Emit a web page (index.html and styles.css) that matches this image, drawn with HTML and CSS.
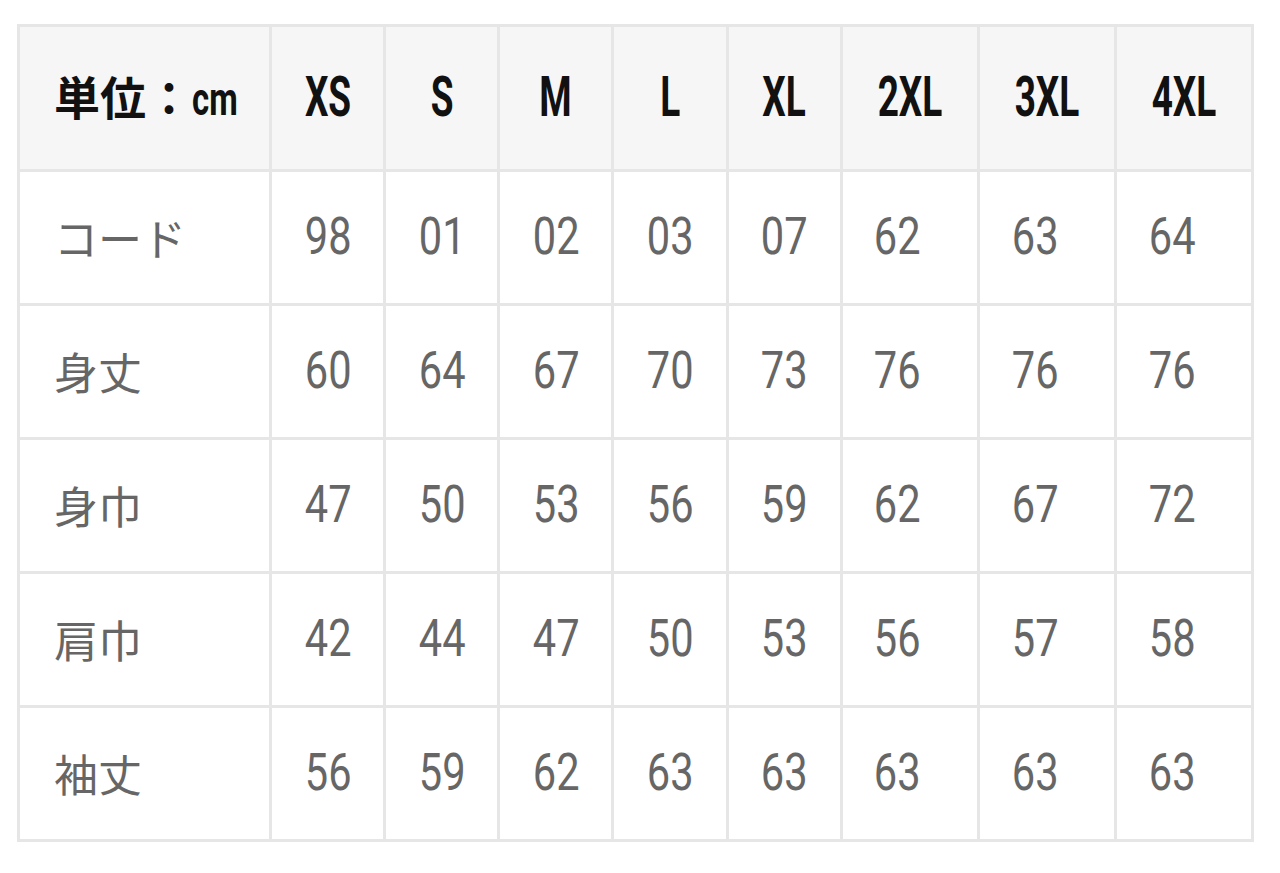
FILE: index.html
```html
<!DOCTYPE html>
<html lang="ja">
<head>
<meta charset="utf-8">
<title>サイズ表</title>
<link rel="stylesheet" href="styles.css">
</head>
<body>
<table class="size-table">
  <colgroup>
    <col class="c-label">
    <col class="c-s"><col class="c-s"><col class="c-s"><col class="c-s"><col class="c-s">
    <col class="c-w"><col class="c-w"><col class="c-w">
  </colgroup>
  <thead>
    <tr>
      <th class="label"><span class="jp">単位：</span><span class="unit">cm</span></th>
      <th><span class="h">XS</span></th>
      <th><span class="h">S</span></th>
      <th><span class="h">M</span></th>
      <th><span class="h">L</span></th>
      <th><span class="h">XL</span></th>
      <th><span class="h">2XL</span></th>
      <th><span class="h">3XL</span></th>
      <th><span class="h">4XL</span></th>
    </tr>
  </thead>
  <tbody>
    <tr><td class="label">コード</td><td><span class="n">98</span></td><td><span class="n">01</span></td><td><span class="n">02</span></td><td><span class="n">03</span></td><td><span class="n">07</span></td><td class="wide"><span class="n">62</span></td><td class="wide"><span class="n">63</span></td><td class="wide"><span class="n">64</span></td></tr>
    <tr><td class="label">身丈</td><td><span class="n">60</span></td><td><span class="n">64</span></td><td><span class="n">67</span></td><td><span class="n">70</span></td><td><span class="n">73</span></td><td class="wide"><span class="n">76</span></td><td class="wide"><span class="n">76</span></td><td class="wide"><span class="n">76</span></td></tr>
    <tr><td class="label">身巾</td><td><span class="n">47</span></td><td><span class="n">50</span></td><td><span class="n">53</span></td><td><span class="n">56</span></td><td><span class="n">59</span></td><td class="wide"><span class="n">62</span></td><td class="wide"><span class="n">67</span></td><td class="wide"><span class="n">72</span></td></tr>
    <tr><td class="label">肩巾</td><td><span class="n">42</span></td><td><span class="n">44</span></td><td><span class="n">47</span></td><td><span class="n">50</span></td><td><span class="n">53</span></td><td class="wide"><span class="n">56</span></td><td class="wide"><span class="n">57</span></td><td class="wide"><span class="n">58</span></td></tr>
    <tr><td class="label">袖丈</td><td><span class="n">56</span></td><td><span class="n">59</span></td><td><span class="n">62</span></td><td><span class="n">63</span></td><td><span class="n">63</span></td><td class="wide"><span class="n">63</span></td><td class="wide"><span class="n">63</span></td><td class="wide"><span class="n">63</span></td></tr>
  </tbody>
</table>
</body>
</html>
```
FILE: styles.css
```css
html, body {
  background: #ffffff;
}
body {
  margin: 0;
  padding: 24px 0 0 17px;
}
.size-table {
  border-collapse: collapse;
  table-layout: fixed;
  width: 1237px;
  font-family: Roboto, "Liberation Sans", "Noto Sans CJK JP", sans-serif;
}
.c-label { width: 252px; }
.c-s { width: 114px; }
.c-w { width: 137px; }
.size-table th,
.size-table td {
  border: 3px solid #e6e6e6;
  text-align: center;
  vertical-align: middle;
  padding: 0;
  line-height: 1.2;
}
.size-table th {
  height: 142px;
  background: #f6f6f6;
  color: #111111;
  font-weight: 700;
  font-size: 56px;
}
.size-table td {
  height: 131px;
  color: #666666;
  font-size: 52px;
  font-weight: 400;
}
.size-table td.wide {
  padding-right: 24px;
}
.h {
  display: inline-block;
  transform: scaleX(0.66);
}
.n {
  display: inline-block;
  transform: scaleX(0.8);
}
.size-table .label {
  text-align: left;
  padding-left: 34px;
  font-family: "Noto Sans CJK JP", sans-serif;
  font-size: 44px;
  font-weight: 400;
}
.size-table th.label {
  font-weight: 700;
  color: #111111;
  font-size: 46px;
  white-space: nowrap;
}
.unit {
  display: inline-block;
  font-family: Roboto, "Liberation Sans", sans-serif;
  font-size: 47px;
  font-weight: 700;
  transform: scaleX(0.7);
  transform-origin: left center;
}
```
